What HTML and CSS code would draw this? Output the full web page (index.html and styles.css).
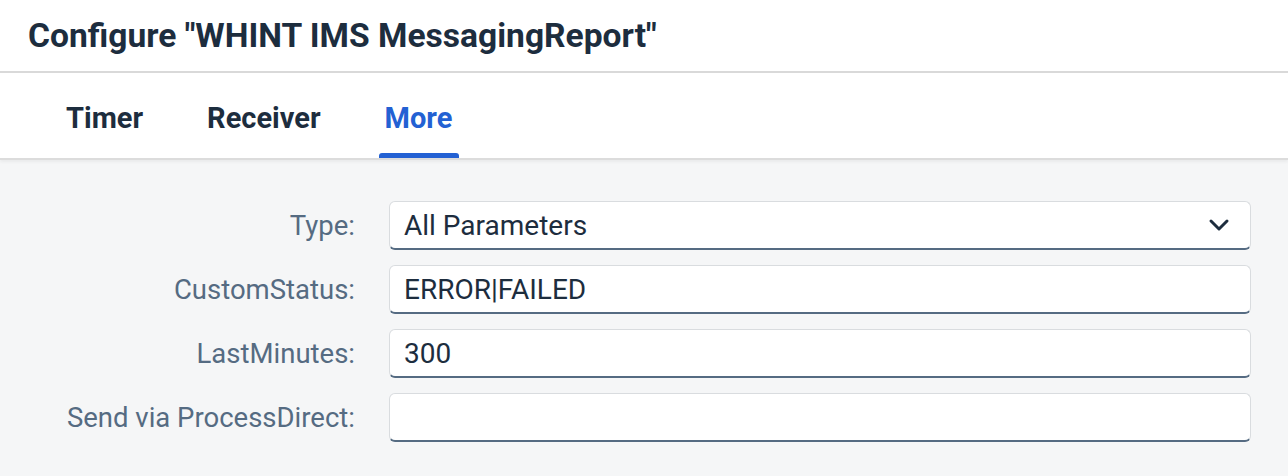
FILE: index.html
```html
<!DOCTYPE html>
<html>
<head>
    <title>Configure</title>
    <link rel="stylesheet" href="styles.css">
</head>
<body>
    <div class="dialog">
        <div class="header">
            <h1>Configure "WHINT IMS MessagingReport"</h1>
        </div>
        <div class="tabs">
            <div class="tab">Timer</div>
            <div class="tab">Receiver</div>
            <div class="tab active">More</div>
        </div>
        <div class="content">
            <div class="form">
                <label>Type:</label>
                <div class="field select">
                    <span>All Parameters</span>
                    <svg class="arrow" width="22" height="14" viewBox="0 0 22 14">
                        <path d="M3 3 L11 11 L19 3" fill="none" stroke="#1d2d3e" stroke-width="3" stroke-linecap="round" stroke-linejoin="round"/>
                    </svg>
                </div>
                <label>CustomStatus:</label>
                <div class="field"><span>ERROR|FAILED</span></div>
                <label>LastMinutes:</label>
                <div class="field"><span>300</span></div>
                <label>Send via ProcessDirect:</label>
                <div class="field"><span></span></div>
            </div>
        </div>
    </div>
</body>
</html>
```

FILE: styles.css
```css
body {
    margin: 0;
    padding: 0;
    font-family: Roboto, "Liberation Sans", sans-serif;
    background-color: #f5f6f7;
    color: #1d2d3e;
}

.dialog {
    width: 1288px;
    height: 476px;
    overflow: hidden;
    background-color: #f5f6f7;
}

.header {
    height: 71px;
    background-color: #fff;
    border-bottom: 2px solid #d9d9d9;
    padding: 0 28px;
    display: flex;
    align-items: center;
}

.header h1 {
    margin: 0;
    font-size: 33.6px;
    font-weight: bold;
    color: #1d2d3e;
    padding-bottom: 1px;
}

.tabs {
    height: 85px;
    background-color: #fff;
    display: flex;
    padding-left: 60px;
    border-bottom: 2px solid #dcdcdc;
    box-shadow: 0 2px 3px rgba(0, 0, 0, 0.05);
}

.tab {
    padding: 0 6px;
    margin-right: 52px;
    font-size: 29px;
    font-weight: bold;
    color: #1d2d3e;
    display: flex;
    align-items: center;
    position: relative;
    padding-top: 4px;
}

.tab.active {
    color: #2361d3;
    padding-right: 7px;
}

.tab.active:after {
    content: "";
    position: absolute;
    left: 0;
    right: 0;
    bottom: 0;
    height: 5px;
    background-color: #2361d3;
    border-radius: 3px 3px 0 0;
}

.content {
    padding-top: 41px;
}

.form {
    display: grid;
    grid-template-columns: 355px 862px;
    column-gap: 34px;
    row-gap: 15px;
}

.form label {
    font-size: 27.5px;
    color: #556b82;
    display: flex;
    align-items: center;
    justify-content: flex-end;
}

.field {
    height: 49px;
    box-sizing: border-box;
    background-color: #fff;
    border: 1px solid #d9dcdf;
    border-bottom: 2px solid #556b82;
    border-radius: 6px;
    padding: 0 14px;
    display: flex;
    align-items: center;
    justify-content: space-between;
    font-size: 28px;
    color: #1d2d3e;
}

.arrow {
    margin-right: 6px;
}
```
